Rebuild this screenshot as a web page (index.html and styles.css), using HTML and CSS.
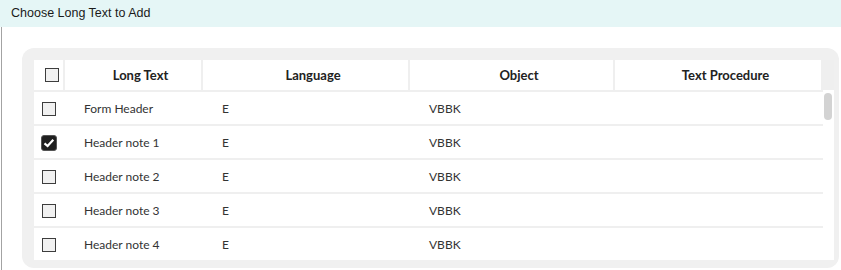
FILE: index.html
```html
<!DOCTYPE html>
<html>
<head>
  <title>Choose Long Text to Add</title>
  <link rel="stylesheet" href="styles.css">
</head>
<body>
  <div class="title-bar">Choose Long Text to Add</div>
  <div class="dialog-body">
    <div class="panel">
      <div class="grid-table">
        <div class="grid-head">
          <div class="check-cell head-check"><span class="checkbox"></span></div>
          <div class="head-cell">Long Text</div>
          <div class="head-cell">Language</div>
          <div class="head-cell">Object</div>
          <div class="head-cell">Text Procedure</div>
        </div>
        <div class="grid-body">
          <div class="rows">
            <div class="row">
              <div class="check-cell"><span class="checkbox"></span></div>
              <div class="cell">Form Header</div>
              <div class="cell">E</div>
              <div class="cell">VBBK</div>
              <div class="cell"></div>
            </div>
            <div class="row">
              <div class="check-cell">
                <span class="checkbox checked">
                  <svg width="14" height="14" viewBox="0 0 14 14"><polyline points="2.5,7.3 5.6,10 11.3,3.8" fill="none" stroke="#fff" stroke-width="2.2"/></svg>
                </span>
              </div>
              <div class="cell">Header note 1</div>
              <div class="cell">E</div>
              <div class="cell">VBBK</div>
              <div class="cell"></div>
            </div>
            <div class="row">
              <div class="check-cell"><span class="checkbox"></span></div>
              <div class="cell">Header note 2</div>
              <div class="cell">E</div>
              <div class="cell">VBBK</div>
              <div class="cell"></div>
            </div>
            <div class="row">
              <div class="check-cell"><span class="checkbox"></span></div>
              <div class="cell">Header note 3</div>
              <div class="cell">E</div>
              <div class="cell">VBBK</div>
              <div class="cell"></div>
            </div>
            <div class="row">
              <div class="check-cell"><span class="checkbox"></span></div>
              <div class="cell">Header note 4</div>
              <div class="cell">E</div>
              <div class="cell">VBBK</div>
              <div class="cell"></div>
            </div>
          </div>
          <div class="scrollbar">
            <div class="thumb"></div>
          </div>
        </div>
      </div>
    </div>
  </div>
</body>
</html>
```

FILE: styles.css
```css
body {
  margin: 0;
  background-color: white;
  font-family: Lato, "Liberation Sans", sans-serif;
  color: #333;
}

.title-bar {
  height: 27px;
  padding-left: 11px;
  line-height: 26px;
  background-color: #e5f6f6;
  color: #1a1a1a;
  font-family: "Liberation Sans", Arial, sans-serif;
  font-size: 12.5px;
}

.dialog-body {
  height: 243px;
  padding-top: 21px;
  border-left: 1px solid #a3a3a3;
  margin-left: 1px;
  box-sizing: border-box;
}

.panel {
  width: 817px;
  height: 220px;
  margin-left: 20px;
  padding: 12px 5px 8px 12px;
  box-sizing: border-box;
  background-color: #f0f0f0;
  border-radius: 12px;
}

.grid-table {
  width: 800px;
  height: 200px;
  overflow: hidden;
  background-color: white;
}

.grid-head {
  display: grid;
  grid-template-columns: 29px 136px 205px 203px 206px;
  column-gap: 2px;
  height: 30px;
  background-color: #efefef;
}

.grid-head > div {
  background-color: white;
}

.head-cell {
  padding-left: 15px;
  line-height: 30px;
  text-align: center;
  font-size: 13px;
  font-weight: bold;
  color: #222;
}

.grid-body {
  display: flex;
}

.rows {
  width: 789px;
}

.row {
  display: grid;
  grid-template-columns: 29px 136px 205px 203px 206px;
  column-gap: 2px;
  height: 32px;
  border-top: 2px solid #efefef;
}

.cell {
  padding: 1px 0 0 19px;
  line-height: 32px;
  font-size: 12px;
}

.check-cell {
  display: flex;
  align-items: center;
  padding-left: 8px;
}

.head-check {
  padding-left: 11px;
}

.checkbox {
  display: block;
  width: 14px;
  height: 14px;
  box-sizing: border-box;
  border: 1.5px solid #3d3d3d;
  background-color: #f1f1f1;
}

.checkbox.checked {
  width: 16px;
  height: 16px;
  margin-left: -1px;
  border: 1px solid #555;
  border-radius: 3px;
  background-color: #1f1f1f;
}

.checkbox svg {
  display: block;
}

.scrollbar {
  width: 11px;
  padding-top: 3px;
}

.thumb {
  width: 8px;
  height: 27px;
  margin-left: 1px;
  border-radius: 4px;
  background-color: #d3d3d3;
}
```
